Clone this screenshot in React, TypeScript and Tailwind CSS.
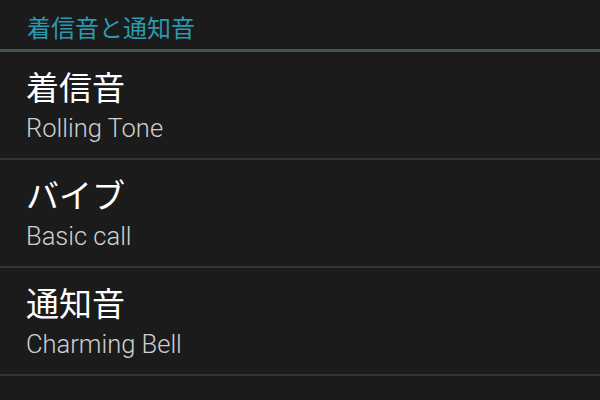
const items = [
  { title: "着信音", sub: "Rolling Tone" },
  { title: "バイブ", sub: "Basic call" },
  { title: "通知音", sub: "Charming Bell" },
];

export default function App() {
  return (
    <div
      className="w-[600px] h-[400px] overflow-hidden bg-[#1b1b1b]"
      style={{ fontFamily: 'Roboto, "Noto Sans CJK JP", sans-serif' }}
    >
      <div className="h-[52px] pl-[27px] pt-[15px] text-[24px] leading-[28px] text-[#2a9ab0] border-b-[3px] border-[#45535d]">
        着信音と通知音
      </div>
      {items.map(({ title, sub }) => (
        <div key={title} className="h-[108px] pl-[26px] pt-[17px] border-b-2 border-[#343434]">
          <div className="text-[33px] leading-[40px] text-white">{title}</div>
          <div className="mt-[3px] text-[25.5px] leading-[32px] font-light text-[#cfcfcf]">{sub}</div>
        </div>
      ))}
    </div>
  );
}
